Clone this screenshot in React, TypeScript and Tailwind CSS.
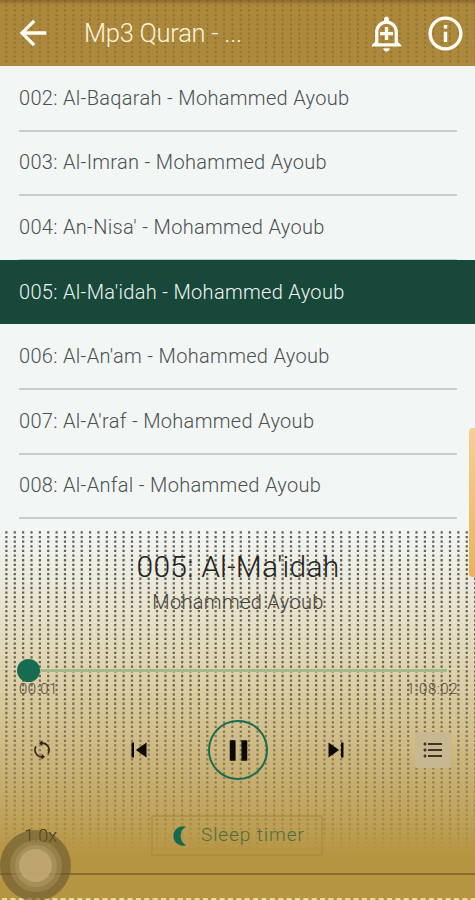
import {
  MdArrowBack,
  MdFormatListBulleted,
  MdOutlineAddAlert,
  MdOutlineInfo,
  MdPause,
  MdSkipNext,
  MdSkipPrevious,
} from 'react-icons/md';

const RECITER = 'Mohammed Ayoub';

const TRACKS = [
  { no: '002', name: 'Al-Baqarah' },
  { no: '003', name: 'Al-Imran' },
  { no: '004', name: "An-Nisa'" },
  { no: '005', name: "Al-Ma'idah" },
  { no: '006', name: "Al-An'am" },
  { no: '007', name: "Al-A'raf" },
  { no: '008', name: 'Al-Anfal' },
];

const ACTIVE = '005';
const COLUMNS = Array.from({ length: 57 }, (_, i) => 6.4 + i * 8.37);

function DotTexture() {
  return (
    <svg className="absolute inset-0 h-full w-full" aria-hidden="true">
      <defs>
        <linearGradient id="fade" x1="0" y1="0" x2="0" y2="370" gradientUnits="userSpaceOnUse">
          <stop offset="0" stopColor="#fff" />
          <stop offset="0.4" stopColor="#ddd" />
          <stop offset="0.68" stopColor="#777" />
          <stop offset="0.8" stopColor="#383838" />
          <stop offset="0.87" stopColor="#000" />
        </linearGradient>
        <mask id="dots" maskUnits="userSpaceOnUse" x="0" y="0" width="475" height="370">
          <rect width="475" height="370" fill="url(#fade)" />
        </mask>
      </defs>
      <g mask="url(#dots)" stroke="#29231a" strokeOpacity="0.72" strokeWidth="2.2" strokeDasharray="2.3 2.33">
        {COLUMNS.map((x) => (
          <line key={x} x1={x} x2={x} y1="1.3" y2="325" />
        ))}
      </g>
      <line x1="2" x2="475" y1="369" y2="369" stroke="#ead9a2" strokeWidth="2" strokeDasharray="5 3.37" />
    </svg>
  );
}

function HeaderTexture() {
  return (
    <svg className="absolute inset-0 h-full w-full" aria-hidden="true">
      <g stroke="#6f5523" strokeOpacity="0.4" strokeWidth="1.8" strokeDasharray="2.3 2.33">
        {COLUMNS.map((x) => (
          <line key={x} x1={x} x2={x} y1="0" y2="64" />
        ))}
      </g>
    </svg>
  );
}

function RepeatIcon() {
  return (
    <svg className="size-[22px]" viewBox="0 0 22 22" fill="none" stroke="#2e2413" strokeWidth="1.6">
      <path d="M10 4.2A6.9 6.9 0 0 1 17 14.6M12 17.8A6.9 6.9 0 0 1 5 7.4" />
      <path d="M11.4 1.2v6L8 4.2ZM10.6 14.8v6l3.4-3Z" fill="#2e2413" stroke="none" />
    </svg>
  );
}

function Header() {
  return (
    <header className="relative h-[66px] shrink-0 bg-linear-to-b from-[#8d6b2b] via-[#ac883c] via-8% to-[#ad893d]">
      <HeaderTexture />
      <div className="relative flex h-full items-center pl-[13px] pr-[9px] text-[#fffdf5]">
        <MdArrowBack size={40} />
        <h1 className="ml-[31px] flex-1 text-[25.5px] font-light tracking-[-0.25px] text-[#fbf3dc]">Mp3 Quran - ...</h1>
        <MdOutlineAddAlert size={39} className="mr-[19px]" />
        <MdOutlineInfo size={41} />
      </div>
    </header>
  );
}

function TrackList() {
  return (
    <ul className="relative h-[464px] shrink-0 overflow-hidden bg-[#f2f7f6] pt-px text-[20px] font-light tracking-[0.32px]">
      {TRACKS.map(({ no, name }) => (
        <li
          key={no}
          className={
            no === ACTIVE
              ? 'relative -top-px h-[64.6px] bg-[#17483a] px-[19px] text-[#eef5f2]'
              : 'h-[64.6px] pr-[18px] pl-[19px] text-[#4c5050]'
          }
        >
          <div
            className={
              no === ACTIVE
                ? 'flex h-full items-center border-b border-transparent pt-px'
                : 'flex h-full items-center border-b-2 border-[#c6cdcb] pb-px'
            }
          >
            {no}: {name} - {RECITER}
          </div>
        </li>
      ))}
    </ul>
  );
}

function Progress() {
  return (
    <div className="mt-11 px-[17px]">
      <div className="flex h-6 items-center">
        <span className="size-[23px] rounded-full bg-[#176b50]" />
        <span className="mr-[11px] h-[3px] flex-1 bg-[#a5b88e]" />
      </div>
      <div className="flex justify-between pl-0.5 text-[15px] leading-[14px] font-light tracking-[0.5px] text-[#50493b]">
        <span>00:01</span>
        <span>1:08:02</span>
      </div>
    </div>
  );
}

function Controls() {
  return (
    <div className="mt-6 flex h-[60px] items-center pl-[31px] text-[#0d0b08]">
      <RepeatIcon />
      <MdSkipPrevious size={30} className="ml-[71px]" />
      <button className="ml-[54px] grid size-[60px] place-items-center rounded-full border-2 border-[#1b6c50]">
        <MdPause size={35} />
      </button>
      <MdSkipNext size={30} className="ml-[53px]" />
      <span className="ml-[64px] grid size-9 place-items-center rounded-xs bg-[#c8b892]">
        <MdFormatListBulleted size={24} className="text-[#3d3527]" />
      </span>
    </div>
  );
}

function Player() {
  return (
    <section className="relative h-[370px] bg-linear-to-b from-[#f2f7f6] from-0% via-[#dccfa6] via-42% to-[#b69541] to-88%">
      <DotTexture />
      <div className="relative flex h-full flex-col">
        <h2 className="mt-[19px] pl-px text-center text-[30px] leading-9 font-light tracking-[0.2px] text-[#25231e]">
          005: Al-Ma'idah
        </h2>
        <p className="mt-[5px] pl-px text-center text-[20px] leading-6 font-light tracking-[0.34px] text-[#454139]">
          {RECITER}
        </p>
        <Progress />
        <Controls />
        <div className="mt-[35px] flex h-[60px] items-start border-b-2 border-[#886a2c]">
          <span className="mt-[9px] ml-[24px] w-[127px] text-[18px] leading-6 font-light text-[#3a2b13]">1.0x</span>
          <button className="flex h-[41px] w-[172px] items-center rounded-xs border-2 border-[#a58638]/50 text-[19px] font-light tracking-[0.9px] whitespace-nowrap text-[#4c703d]">
            <svg className="mr-[14px] ml-[20px] h-5 w-[14px] shrink-0" viewBox="0 0 13 20" fill="#12694d">
              <path d="M12.5.8A10.5 10.5 0 0 0 12.5 19.2C8 21 0 18 0 10S8-1 12.5.8Z" />
            </svg>
            Sleep timer
          </button>
        </div>
      </div>
    </section>
  );
}

export default function App() {
  return (
    <div className="relative flex h-[900px] w-[475px] flex-col overflow-hidden font-[Roboto,sans-serif]">
      <Header />
      <TrackList />
      <Player />

      {/* Edge handle */}
      <div className="absolute top-[428px] right-0 h-[149px] w-[6px] rounded-l-sm bg-linear-to-b from-[#f7cf91] to-[#ebb358]" />

      {/* Floating touch button */}
      <div className="absolute top-[830px] left-0 grid size-[71px] place-items-center rounded-full bg-[#65572f]/60">
        <div className="grid size-[52px] place-items-center rounded-full bg-[#b7a16c]/35">
          <div className="grid size-[42px] place-items-center rounded-full bg-[#c6ad77]/35">
            <div className="size-[33px] rounded-full bg-[#c7ae7b]/70" />
          </div>
        </div>
      </div>
    </div>
  );
}
